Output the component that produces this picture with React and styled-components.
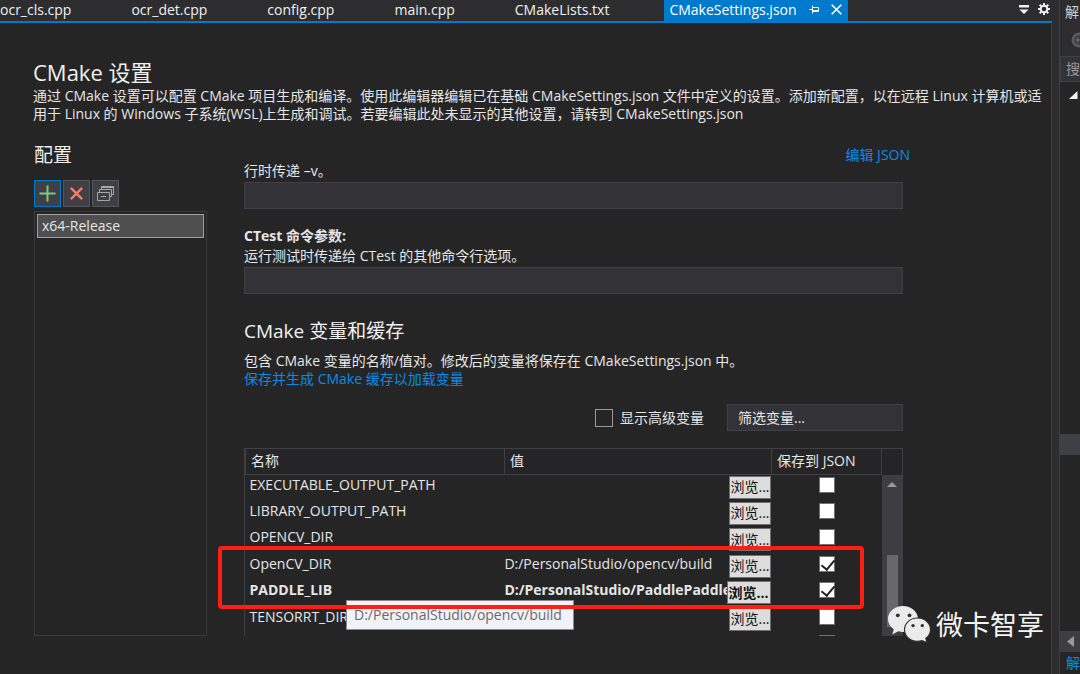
import React, { useState } from 'react';
import styled, { createGlobalStyle } from 'styled-components';

const tabs = ['ocr_cls.cpp', 'ocr_det.cpp', 'config.cpp', 'main.cpp', 'CMakeLists.txt'];

const variables = [
    { name: 'EXECUTABLE_OUTPUT_PATH', value: '', saved: false },
    { name: 'LIBRARY_OUTPUT_PATH', value: '', saved: false },
    { name: 'OPENCV_DIR', value: '', saved: false },
    { name: 'OpenCV_DIR', value: 'D:/PersonalStudio/opencv/build', saved: true },
    { name: 'PADDLE_LIB', value: 'D:/PersonalStudio/PaddlePaddle', saved: true, bold: true },
    { name: 'TENSORRT_DIR', value: '', saved: false },
    { name: '', value: '', saved: false },
];

const VariableRow = ({ item }) => {

    const [saved, setSaved] = useState(item.saved);

    return (
        <Row $bold={item.bold}>
            <td>{item.name}</td>
            <td>
                {item.name && (
                <ValueCell>
                    <span>{item.value}</span>
                    <Browse $bold={item.bold}>浏览...</Browse>
                </ValueCell>
                )}
            </td>
            <td>
                <SaveBox
                    type="checkbox"
                    aria-label={`保存 ${item.name}`}
                    checked={saved}
                    onChange={() => setSaved(!saved)}
                />
            </td>
        </Row>
    )
}

const App = () => {
  return (
    <Window>
        <GlobalStyle />
        <Editor>
            <TabBar>
                {tabs.map((tab) => <Tab key={tab}>{tab}</Tab>)}
                <Tab $active>
                    CMakeSettings.json
                    <svg width="10" height="9" viewBox="0 0 10 9" fill="none" stroke="currentColor">
                        <path d="M0 4.5H3.5M3.5 0.5V8.5M3.5 2.5H9.5V6.5H3.5M3.5 5.5H9.5" />
                    </svg>
                    <svg width="11" height="11" viewBox="0 0 11 11" fill="none" stroke="currentColor" strokeWidth="1.6">
                        <path d="M0.7 0.7L10.3 10.3M10.3 0.7L0.7 10.3" />
                    </svg>
                </Tab>
                <TabTools>
                    <IconButton aria-label="窗口列表">
                        <svg width="10" height="9" viewBox="0 0 10 9" fill="currentColor">
                            <path d="M0 0H10V2.5H0ZM0.5 4.5H9.5L5 9Z" />
                        </svg>
                    </IconButton>
                    <IconButton aria-label="选项">
                        <svg width="12" height="12" viewBox="0 0 12 12" fill="none" stroke="currentColor">
                            <circle cx="6" cy="6" r="3.3" strokeWidth="2" />
                            <path strokeWidth="2" d="M6 0V2M6 10V12M0 6H2M10 6H12M1.7 1.7L3.2 3.2M8.8 8.8L10.3 10.3M1.7 10.3L3.2 8.8M8.8 3.2L10.3 1.7" />
                        </svg>
                    </IconButton>
                </TabTools>
            </TabBar>

            <Page>
                <Intro>
                    <h1>CMake 设置</h1>
                    <p>
                        通过 CMake 设置可以配置 CMake 项目生成和编译。使用此编辑器编辑已在基础 CMakeSettings.json 文件中定义的设置。添加新配置，以在远程 Linux 计算机或适用于 Linux 的 Windows 子系统(WSL)上生成和调试。若要编辑此处未显示的其他设置，请转到 CMakeSettings.json
                    </p>
                </Intro>

                <Columns>
                    <Configs>
                        <h2>配置</h2>
                        <Tools>
                            <ToolButton $focused aria-label="添加">
                                <svg width="17" height="17" viewBox="0 0 17 17" stroke="#7fc97b" strokeWidth="2">
                                    <path d="M8.5 0.5V16.5M0.5 8.5H16.5" />
                                </svg>
                            </ToolButton>
                            <ToolButton aria-label="移除">
                                <svg width="13" height="13" viewBox="0 0 15 15" stroke="#f0806a" strokeWidth="2.6">
                                    <path d="M1 1L14 14M14 1L1 14" />
                                </svg>
                            </ToolButton>
                            <ToolButton aria-label="复制">
                                <svg width="17" height="15" viewBox="0 0 17 15" fill="none" stroke="#a6a6a6">
                                    <path d="M4.5 4V0.5H16.5V8.5H14.5M4.5 1.5H16.5M2.500 6V3.500H14.500V10.500H13M0.5 6.5H12.5V14.5H0.5ZM4 10.5H9" />
                                </svg>
                            </ToolButton>
                        </Tools>
                        <ConfigList>
                            <li><ConfigItem>x64-Release</ConfigItem></li>
                        </ConfigList>
                    </Configs>

                    <Settings>
                        <EditLink href="#json">编辑 JSON</EditLink>
                        <Field>
                            <label htmlFor="build-args">行时传递 –v。</label>
                            <TextBox id="build-args" />
                        </Field>
                        <Field>
                            <label htmlFor="ctest-args">
                                <strong>CTest 命令参数:</strong>
                                运行测试时传递给 CTest 的其他命令行选项。
                            </label>
                            <TextBox id="ctest-args" />
                        </Field>

                        <Section>
                            <h2>CMake 变量和缓存</h2>
                            <p>包含 CMake 变量的名称/值对。修改后的变量将保存在 CMakeSettings.json 中。</p>
                            <a href="#cache">保存并生成 CMake 缓存以加载变量</a>
                        </Section>

                        <Filters>
                            <Advanced>
                                <input type="checkbox" />
                                显示高级变量
                            </Advanced>
                            <FilterBox aria-label="筛选变量" placeholder="筛选变量..." />
                        </Filters>

                        <GridArea>
                            <GridFrame>
                                <Table>
                                    <colgroup>
                                        <col />
                                        <col style={{ width: '42%' }} />
                                        <col style={{ width: '110px' }} />
                                    </colgroup>
                                    <thead>
                                        <tr>
                                            <th>名称</th>
                                            <th>值</th>
                                            <th>保存到 JSON</th>
                                        </tr>
                                    </thead>
                                    <tbody>
                                        {variables.map((item) => <VariableRow key={item.name} item={item} />)}
                                    </tbody>
                                </Table>
                                <ScrollBar>
                                    <svg width="10" height="5" viewBox="0 0 10 5" fill="#999999">
                                        <path d="M0 5L5 0L10 5Z" />
                                    </svg>
                                    <Thumb />
                                </ScrollBar>
                            </GridFrame>
                            <Tooltip>D:/PersonalStudio/opencv/build</Tooltip>
                            <Marker />
                        </GridArea>
                    </Settings>
                </Columns>
            </Page>

            <Watermark>
                <svg width="43" height="37" viewBox="0 0 43 37">
                    <path fill="#ebebeb" d="M15 0C6.700 0 0 5.800 0 13C0 17.200 2.200 20.800 5.800 23.200L4.300 28.500L10.200 25.300C11.800 25.800 13.400 26 15 26C23.300 26 30 20.200 30 13S23.300 0 15 0Z" />
                    <path fill="#ebebeb" stroke="#303030" strokeWidth="1.200" d="M29.500 12C22.300 12 16.500 17.200 16.500 23.700S22.300 35.400 29.500 35.400C31.100 35.400 32.600 35.100 34 34.700L39 36.600L37.800 32.300C40.700 30.200 42.500 27.100 42.500 23.700C42.500 17.200 36.700 12 29.500 12Z" />
                    <g fill="#303030">
                        <circle cx="9.800" cy="9.300" r="1.900" />
                        <circle cx="21.500" cy="9.300" r="1.900" />
                        <circle cx="25" cy="19.600" r="1.700" />
                        <circle cx="34.300" cy="19.600" r="1.700" />
                    </g>
                </svg>
                微卡智享
            </Watermark>
        </Editor>

        <Explorer>
            <ExplorerTitle>解</ExplorerTitle>
            <ExplorerTools>
                <svg width="16" height="16" viewBox="0 0 16 16" fill="none">
                    <circle cx="8" cy="8" r="6" stroke="#5a5a5c" strokeWidth="3" />
                    <path d="M13 8H5M8 5L5 8L8 11" stroke="#5a5a5c" strokeWidth="2" />
                </svg>
            </ExplorerTools>
            <SearchBox>搜</SearchBox>
            <Tree>
                <svg width="9" height="8" viewBox="0 0 9 8" fill="#f1f1f1">
                    <path d="M8.500 0V8H0Z" />
                </svg>
                <Selected />
            </Tree>
            <HScroll>
                <svg width="7" height="11" viewBox="0 0 7 11" fill="#999999">
                    <path d="M7 0V11L0 5.500Z" />
                </svg>
            </HScroll>
            <PanelTab href="#explorer">解</PanelTab>
        </Explorer>
    </Window>
  )
}

const GlobalStyle = createGlobalStyle`
    *{
        box-sizing: border-box;
    }
    body{
        margin: 0;
        background: #252526;
    }
    body, button, input{
        font-family: "Open Sans", "Noto Sans CJK SC", sans-serif;
        font-size: 14px;
        line-height: 18px;
        color: #e6e6e6;
    }
    h1, h2, p, ul{
        margin: 0;
        padding: 0;
    }
    h1, h2{
        font-weight: 400;
        color: #f1f1f1;
    }
    h2{
        font-size: 19px;
    }
    a{
        color: #0a8be4;
        text-decoration: none;
    }
    svg{
        flex: none;
    }
`;

const Window = styled.div`
    display: flex;
    height: 100vh;
    overflow: hidden;
    background: #2d2d30;
`;

const Editor = styled.main`
    position: relative;
    flex: 1;
    min-width: 0;
    display: flex;
    flex-direction: column;
`;

const TabBar = styled.nav`
    display: flex;
    height: 23px;
    margin-left: -5px;
    border-bottom: 2px solid #007acc;
`;

const Tab = styled.div`
    display: flex;
    align-items: center;
    padding: 0 ${props => props.$active ? '6px' : '55px'} 2px 5px;
    gap: 12px;
    white-space: nowrap;
    background: ${props => props.$active ? '#007acc' : 'transparent'};
    color: ${props => props.$active ? '#ffffff' : '#f1f1f1'};
`;

const TabTools = styled.div`
    display: flex;
    align-items: center;
    gap: 9px;
    margin-left: auto;
    padding: 0 2px 3px 0;
`;

const IconButton = styled.button`
    display: flex;
    padding: 0;
    border: none;
    background: none;
    color: #f1f1f1;
`;

const Page = styled.div`
    flex: 1;
    min-height: 0;
    display: flex;
    flex-direction: column;
    padding: 36px 0 38px 33px;
    background: #252526;
    border-right: 1px solid #3f3f46;
`;

const Intro = styled.header`
    h1{
        margin-bottom: 2px;
        font-size: 22px;
        line-height: 26px;
    }
`;

const Columns = styled.div`
    flex: 1;
    min-height: 0;
    display: grid;
    grid-template-columns: 173px 1fr;
    gap: 37px;
    padding: 22px 141px 0 1px;
`;

const Configs = styled.section`
    display: flex;
    flex-direction: column;
    min-height: 0;

    h2{
        line-height: 20px;
    }
`;

const Tools = styled.div`
    display: flex;
    gap: 2px;
    margin: 15px 0 4px;
`;

const ToolButton = styled.button`
    display: flex;
    align-items: center;
    justify-content: center;
    width: 27px;
    height: 27px;
    padding: 0;
    background: #3f3f46;
    border: 1px solid ${props => props.$focused ? '#007acc' : '#55555a'};
`;

const ConfigList = styled.ul`
    flex: 1;
    padding: 2px;
    border: 1px solid #3a3a3c;
    list-style: none;
`;

const ConfigItem = styled.button`
    width: 100%;
    height: 24px;
    padding: 0 4px;
    text-align: left;
    background: #4f4f4f;
    border: 1px solid #a0a0a0;
`;

const Settings = styled.section`
    display: flex;
    flex-direction: column;
    min-width: 0;
    min-height: 0;
    padding-right: 7px;
`;

const EditLink = styled.a`
    align-self: flex-end;
    margin: 0 -7px -4px 0;
    line-height: 20px;
`;

const Field = styled.div`
    display: flex;
    flex-direction: column;
    align-items: flex-start;
    gap: 1px;
    margin-bottom: 17px;

    label{
        line-height: 20px;
    }
    strong{
        display: block;
    }
`;

const TextBox = styled.input`
    width: 100%;
    height: 27px;
    padding: 0 10px;
    background: #333337;
    border: 1px solid #3f3f46;
    border-radius: 0;
    outline: none;
`;

const Section = styled.div`
    h2{
        margin: 7px 0 8px;
        line-height: 26px;
    }
    a{
        display: block;
    }
`;

const Filters = styled.div`
    display: flex;
    justify-content: flex-end;
    align-items: center;
    gap: 23px;
    margin: 16px 0 17px;
`;

const Advanced = styled.label`
    display: flex;
    align-items: center;
    gap: 7px;

    input{
        appearance: none;
        width: 18px;
        height: 18px;
        margin: 0;
        border: 1px solid #999999;
    }
`;

const FilterBox = styled(TextBox)`
    width: 176px;

    &::placeholder{
        color: #e6e6e6;
    }
`;

const GridArea = styled.div`
    position: relative;
    flex: 1;
    min-height: 0;
`;

const GridFrame = styled.div`
    display: flex;
    height: 100%;
    overflow: hidden;
    border: 1px solid #3f3f46;
    border-bottom: none;
`;

const Table = styled.table`
    flex: 1;
    min-width: 0;
    height: 211px;
    align-self: flex-start;
    table-layout: fixed;
    border-collapse: collapse;

    th{
        height: 25px;
        padding: 0 5px;
        font-weight: 400;
        text-align: left;
        border: 1px solid #3f3f46;
        border-top: none;
    }
    td{
        height: 26px;
        padding: 0;
        line-height: 20px;
        vertical-align: top;
    }
    td:first-child{
        padding-left: 4px;
    }
    td:last-child{
        text-align: center;
    }
`;

const Row = styled.tr`
    font-weight: ${props => props.$bold ? 700 : 400};
`;

const ValueCell = styled.div`
    display: flex;
    justify-content: space-between;
    align-items: flex-start;
    padding-right: 1px;

    span{
        min-width: 0;
        overflow: hidden;
        white-space: nowrap;
    }
`;

const Browse = styled.button`
    flex: none;
    height: 23px;
    margin-top: 1px;
    padding: 0 ${props => props.$bold ? '1px' : '0'};
    font-weight: ${props => props.$bold ? 700 : 400};
    color: #111111;
    background: #dddddd;
    border: 1px solid #707070;
`;

const SaveBox = styled.input`
    appearance: none;
    display: block;
    width: 16px;
    height: 16px;
    margin: 2px auto 0;
    border: 1px solid #707070;
    background: #ffffff;

    &:checked::after{
        content: "";
        display: block;
        width: 6px;
        height: 11px;
        margin: 0 0 0 4px;
        border: solid #212121;
        border-width: 0 2px 2px 0;
        transform: rotate(40deg);
    }
`;

const ScrollBar = styled.div`
    display: flex;
    flex-direction: column;
    align-items: center;
    width: 20px;
    margin-top: 26px;
    padding: 7px 0 9px;
    background: #3e3e42;
`;

const Thumb = styled.div`
    width: 11px;
    height: 72px;
    margin-top: auto;
    background: #686868;
`;

const Tooltip = styled.div`
    position: absolute;
    left: 102px;
    top: 152px;
    padding: 5px 11px 5px 7px;
    white-space: nowrap;
    color: #6a6a6a;
    background: #f1f2f7;
    border: 1px solid #8a8a8e;
`;

const Marker = styled.div`
    position: absolute;
    left: -26px;
    right: 39px;
    top: 98px;
    height: 63px;
    border: 4px solid #ff1f12;
    border-radius: 4px;
    pointer-events: none;
`;

const Watermark = styled.div`
    position: absolute;
    right: 8px;
    bottom: 31px;
    display: flex;
    align-items: center;
    gap: 5px;
    font-size: 27px;
    line-height: 36px;
    color: #f4f4f4;
`;

const Explorer = styled.aside`
    display: flex;
    flex-direction: column;
    width: 21px;
    margin-left: 7px;
    overflow: hidden;
    border-left: 1px solid #3f3f46;
`;

const ExplorerTitle = styled.div`
    padding: 3px 0 0 5px;
    color: #d0d0d0;
`;

const ExplorerTools = styled.div`
    display: flex;
    height: 35px;
    padding: 11px 0 0 11px;
`;

const SearchBox = styled.div`
    padding: 3px 0 3px 5px;
    color: #999999;
    background: #333337;
    border: 1px solid #3f3f46;
    border-right: none;
`;

const Tree = styled.div`
    flex: 1;
    padding: 9px 0 0 9px;
    background: #252526;

    svg{
        display: block;
    }
`;

const Selected = styled.div`
    height: 21px;
    margin: 335px 0 0 -9px;
    background: #3f3f46;
`;

const HScroll = styled.div`
    padding: 5px 0 5px 7px;
    line-height: 10px;
    background: #3e3e42;
`;

const PanelTab = styled.a`
    padding: 2px 0 2px 6px;
    background: #252526;
`;

export default App
